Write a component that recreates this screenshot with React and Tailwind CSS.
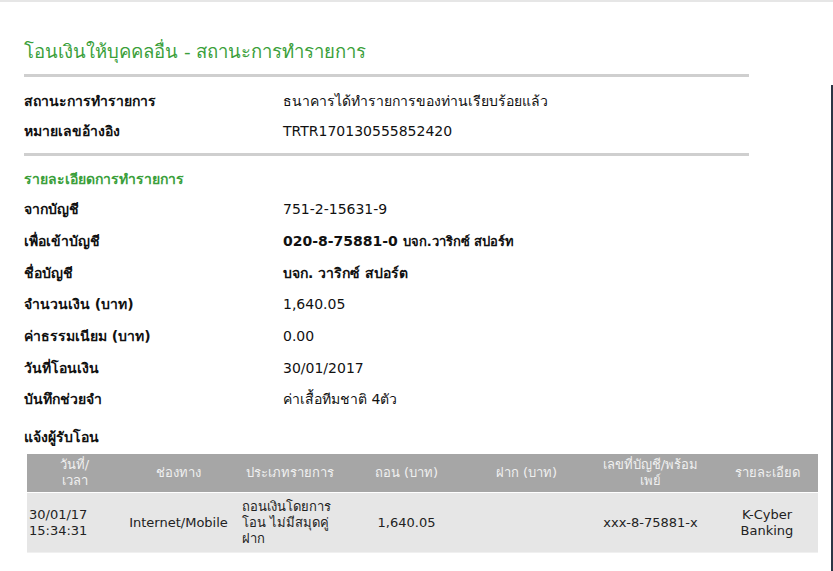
const rows = [
  { label: 'จากบัญชี', value: '751-2-15631-9' },
  { label: 'เพื่อเข้าบัญชี', value: '020-8-75881-0 ', extra: 'บจก.วาริกซ์ สปอร์ท', bold: true },
  { label: 'ชื่อบัญชี', value: 'บจก. วาริกซ์ สปอร์ต', bold: true },
  { label: 'จำนวนเงิน (บาท)', value: '1,640.05' },
  { label: 'ค่าธรรมเนียม (บาท)', value: '0.00' },
  { label: 'วันที่โอนเงิน', value: '30/01/2017' },
  { label: 'บันทึกช่วยจำ', value: 'ค่าเสื้อทีมชาติ 4ตัว' },
]

function Row({ label, children, className = 'h-[30px]' }) {
  return (
    <div className={`flex items-center ${className}`}>
      <div className="w-[259px] shrink-0 font-bold">{label}</div>
      <div>{children}</div>
    </div>
  )
}

export default function App() {
  return (
    <div
      className="flex min-h-[571px] w-[833px] bg-white text-[14px] text-[#111] border-t-2 border-[#e6e6e6]"
      style={{ fontFamily: '"DejaVu Sans", "Noto Sans", sans-serif' }}
    >
      <div className="flex-1 pl-6">
        <h1 className="pt-[38px] text-[18.5px] leading-[24px] text-[#3b9f3b]">
          โอนเงินให้บุคคลอื่น - สถานะการทำรายการ
        </h1>
        <div className="mt-[10px] h-[3px] w-[725px] bg-[#cfcfcf]" />

        <div className="mt-[9px]">
          <Row label="สถานะการทำรายการ">ธนาคารได้ทำรายการของท่านเรียบร้อยแล้ว</Row>
          <Row label="หมายเลขอ้างอิง">TRTR170130555852420</Row>
        </div>
        <div className="mt-[7px] h-[3px] w-[725px] bg-[#cfcfcf]" />

        <h2 className="mt-[11px] h-[24px] leading-[24px] text-[14px] font-bold text-[#3b9f3b]">
          รายละเอียดการทำรายการ
        </h2>

        <div className="mt-[3px]">
          {rows.map((r) => (
            <Row key={r.label} label={r.label} className="h-[31.7px]">
              <span className={r.bold ? 'font-bold' : ''}>{r.value}</span>
              {r.extra && <span className="font-bold text-[13px]">{r.extra}</span>}
            </Row>
          ))}
        </div>

        <div className="mt-[9px] h-[24px] leading-[24px] font-bold">แจ้งผู้รับโอน</div>

        <table className="mt-[5px] ml-[3px] w-[791px] table-fixed border-collapse text-[13px] leading-[16px]">
          <colgroup>
            <col className="w-[95px]" />
            <col className="w-[113px]" />
            <col className="w-[110px]" />
            <col className="w-[123px]" />
            <col className="w-[117px]" />
            <col className="w-[131px]" />
            <col className="w-[102px]" />
          </colgroup>
          <thead>
            <tr className="h-[39px] bg-[#a6a6a6] text-[#f0f0f0]">
              <th className="font-normal text-center">วันที่/<br />เวลา</th>
              <th className="font-normal text-center">ช่องทาง</th>
              <th className="font-normal text-center">ประเภทรายการ</th>
              <th className="font-normal text-center">ถอน (บาท)</th>
              <th className="font-normal text-center">ฝาก (บาท)</th>
              <th className="font-normal text-center">เลขที่บัญชี/พร้อม<br />เพย์</th>
              <th className="font-normal text-center">รายละเอียด</th>
            </tr>
          </thead>
          <tbody>
            <tr className="h-[60px] bg-[#e6e6e6] text-[#222] border-t border-white border-b border-b-[#f0f0f0]">
              <td className="pl-[2px] text-left">30/01/17<br />15:34:31</td>
              <td className="text-center">Internet/Mobile</td>
              <td className="pl-[7px] text-left">ถอนเงินโดยการ<br />โอน ไม่มีสมุดคู่<br />ฝาก</td>
              <td className="text-center">1,640.05</td>
              <td className="text-center"></td>
              <td className="text-center">xxx-8-75881-x</td>
              <td className="text-center">K-Cyber<br />Banking</td>
            </tr>
          </tbody>
        </table>
      </div>

      <div className="flex w-[2px] flex-col">
        <div className="h-[83px]" />
        <div className="flex-1 bg-[#2b3645]" />
      </div>
    </div>
  )
}
